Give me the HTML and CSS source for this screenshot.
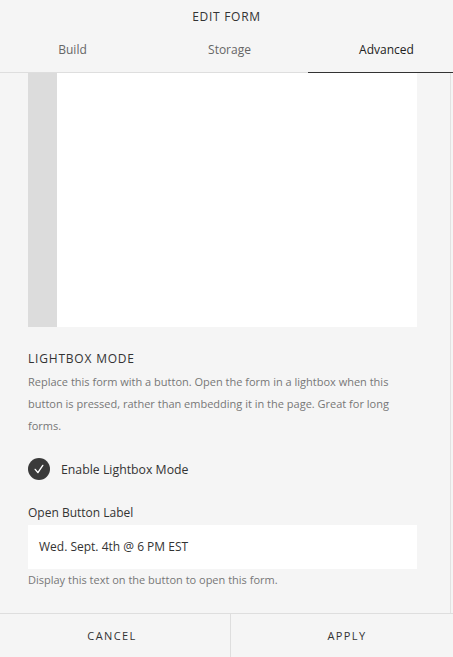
FILE: index.html
```html
<!DOCTYPE html>
<html>
<head>
<meta charset="utf-8">
<link rel="stylesheet" href="styles.css">
</head>
<body>
<div class="panel">
  <div class="header">EDIT FORM</div>
  <div class="tabs">
    <div class="tab tab-build">Build</div>
    <div class="tab tab-storage">Storage</div>
    <div class="tab tab-advanced active">Advanced</div>
  </div>
  <div class="main">
    <div class="content">
      <div class="preview">
        <div class="preview-strip"></div>
        <div class="preview-body"></div>
      </div>
      <div class="section-title">LIGHTBOX MODE</div>
      <div class="desc">Replace this form with a button. Open the form in a lightbox when this button is pressed, rather than embedding it in the page. Great for long forms.</div>
      <div class="check-row">
        <span class="check">
          <svg width="22" height="22" viewBox="0 0 22 22"><path d="M7.2 11.4 L9.9 14.6 L14.8 7.4" fill="none" stroke="#fff" stroke-width="1.4" stroke-linecap="round" stroke-linejoin="round"/></svg>
        </span>
        <span class="check-label">Enable Lightbox Mode</span>
      </div>
      <div class="field-label">Open Button Label</div>
      <div class="input">Wed. Sept. 4th @ 6 PM EST</div>
      <div class="hint">Display this text on the button to open this form.</div>
    </div>
    <div class="scrollbar"></div>
  </div>
  <div class="footer">
    <div class="btn btn-cancel">CANCEL</div>
    <div class="btn btn-apply">APPLY</div>
  </div>
</div>
</body>
</html>
```
FILE: styles.css
```css
html, body {
  margin: 0;
  padding: 0;
  background: #f5f5f5;
}
body {
  font-family: "Open Sans", "Liberation Sans", Arial, sans-serif;
  color: #333;
  width: 453px;
  height: 657px;
  overflow: hidden;
}
.panel {
  display: flex;
  flex-direction: column;
  height: 657px;
}
.header {
  height: 34px;
  line-height: 34px;
  text-align: center;
  font-size: 12px;
  letter-spacing: 0.7px;
  color: #333;
}
.tabs {
  display: flex;
  height: 38px;
  border-bottom: 1px solid #dedede;
  font-size: 12px;
  color: #666;
}
.tab {
  line-height: 32px;
  text-align: center;
  box-sizing: border-box;
}
.tab-build { width: 151px; padding-right: 6px; }
.tab-storage { width: 157px; }
.tab-advanced { width: 145px; padding-left: 12px; }
.tab.active {
  color: #222;
  border-bottom: 1px solid #333;
  margin-bottom: -1px;
  height: 39px;
}
.main {
  display: flex;
  height: 540px;
}
.content {
  width: 450px;
  box-sizing: border-box;
  padding: 0 33px 0 28px;
}
.scrollbar {
  width: 2px;
  border-left: 1px solid #e2e2e2;
}
.preview {
  display: flex;
  height: 254px;
}
.preview-strip {
  width: 29px;
  background: #dcdcdc;
}
.preview-body {
  flex: 1;
  background: #fff;
}
.section-title {
  margin-top: 24px;
  line-height: 16px;
  font-size: 12px;
  letter-spacing: 0.8px;
  color: #333;
}
.desc {
  margin-top: 4px;
  font-size: 11px;
  line-height: 22px;
  color: #777;
}
.check-row {
  display: flex;
  align-items: center;
  margin-top: 21px;
  height: 22px;
}
.check {
  width: 22px;
  height: 22px;
  border-radius: 50%;
  background: #3a3a3a;
  display: flex;
}
.check-label {
  margin-left: 11px;
  font-size: 12.3px;
  color: #333;
}
.field-label {
  margin-top: 25px;
  font-size: 12px;
  line-height: 16px;
  color: #333;
}
.input {
  margin-top: 4px;
  height: 44px;
  line-height: 44px;
  background: #fff;
  padding-left: 11px;
  font-size: 12px;
  color: #333;
}
.hint {
  margin-top: 3px;
  font-size: 11px;
  line-height: 16px;
  color: #777;
}
.footer {
  display: flex;
  height: 43px;
  border-top: 1px solid #dedede;
}
.btn {
  line-height: 43px;
  text-align: center;
  font-size: 11px;
  letter-spacing: 1.4px;
  color: #333;
  box-sizing: border-box;
}
.btn-cancel { width: 230px; padding-right: 6px; }
.btn-apply { flex: 1; border-left: 1px solid #dedede; padding-left: 10px; }
```
